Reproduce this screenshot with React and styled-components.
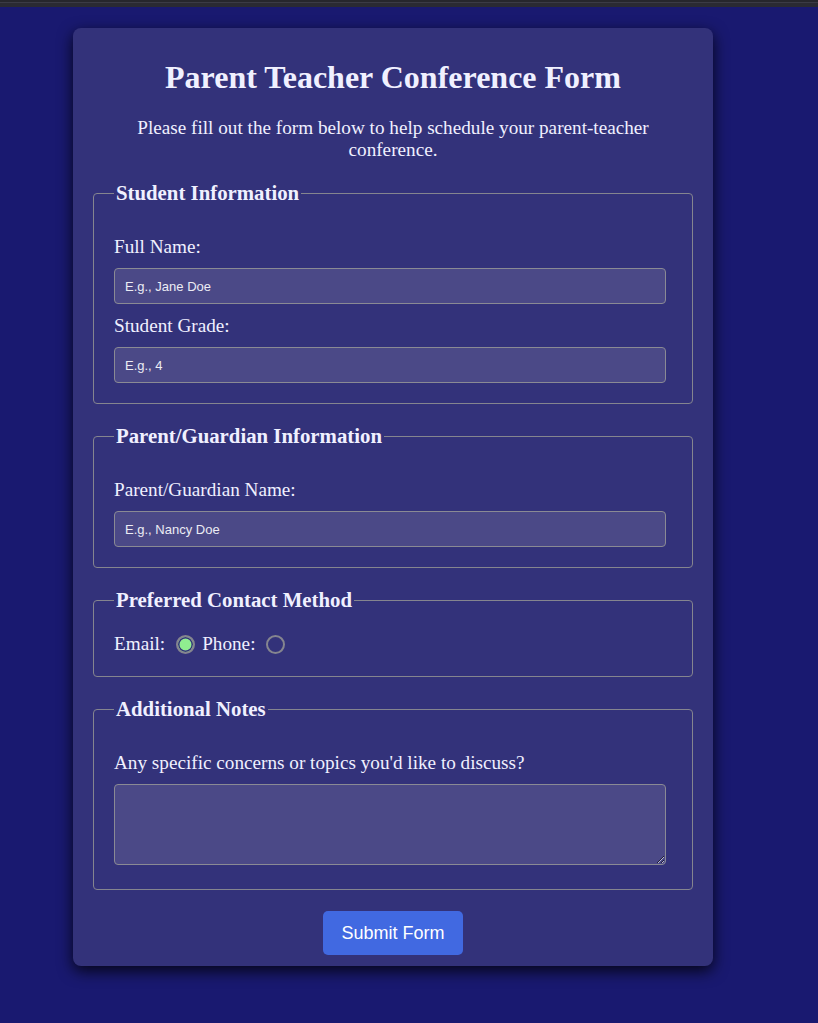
import React, { useState } from 'react';
import styled, { createGlobalStyle } from 'styled-components';

const GlobalStyle = createGlobalStyle`
    body {
        margin: 0;
        background: #191970;
        font-family: "Liberation Serif", "Times New Roman", serif;
        color: #f0f0ff;
    }
`;

const TopBar = styled.div`
    height: 7px;
    background: #2a2a33;
    border-top: 2px solid #26262d;
    box-sizing: border-box;
    box-shadow: inset 0 1px 0 #3b3b46;
`;

const Page = styled.div`
    padding: 21px 0 40px 73px;
`;

const Card = styled.form`
    width: 640px;
    box-sizing: border-box;
    padding: 10px 20px 11px;
    background: #33327a;
    border-radius: 8px;
    box-shadow: 0 5px 15px rgba(0, 0, 0, 0.8);
    display: flex;
    flex-direction: column;
`;

const Title = styled.h1`
    margin: 21px 0 21px;
    font-size: 32px;
    line-height: 37px;
    text-align: center;
`;

const Intro = styled.p`
    margin: 0 0 20px;
    font-size: 19.2px;
    line-height: 22px;
    text-align: center;
`;

const Section = styled.fieldset`
    margin: 0 0 20px;
    padding: 20px 20px 20px;
    border: 1px solid #85858f;
    border-radius: 4px;
`;

const Legend = styled.legend`
    padding: 0 2px;
    font-size: 20.8px;
    line-height: 24px;
    font-weight: bold;
`;

const Label = styled.label`
    display: block;
    margin: 10px 0 9px;
    font-size: 19.2px;
    line-height: 24px;
`;

const TextInput = styled.input`
    display: block;
    width: 552px;
    height: 36px;
    box-sizing: border-box;
    padding: 0 10px;
    background: #4b4987;
    border: 1px solid #8a8a94;
    border-radius: 4px;
    color: #f0f0ff;
    font-family: "Liberation Sans", Arial, sans-serif;
    font-size: 13px;

    &::placeholder {
        color: #ececf4;
    }
`;

const NotesArea = styled.textarea`
    display: block;
    width: 552px;
    height: 81px;
    box-sizing: border-box;
    margin-bottom: 4px;
    padding: 10px;
    background: #4b4987;
    border: 1px solid #8a8a94;
    border-radius: 4px;
    color: #f0f0ff;
    font-family: "Liberation Sans", Arial, sans-serif;
`;

const RadioRow = styled.div`
    display: flex;
    align-items: center;
    font-size: 19.2px;
    line-height: 24px;
`;

const Radio = styled.input`
    appearance: none;
    width: 19px;
    height: 19px;
    margin: 0 7px 0 11px;
    border: 2px solid #85858f;
    border-radius: 50%;
    box-sizing: border-box;
    background: transparent;

    &:checked {
        background: #90ee90;
        box-shadow: inset 0 0 0 1.5px #33327a;
    }
`;

const SubmitButton = styled.button`
    align-self: center;
    width: 140px;
    height: 44px;
    margin-top: 1px;
    background: #4169e1;
    border: none;
    border-radius: 5px;
    color: #fff;
    font-family: "Liberation Sans", Arial, sans-serif;
    font-size: 18px;
    cursor: pointer;
`;

const App = () => {
    const [contact, setContact] = useState('email');

    return (
        <>
            <GlobalStyle />
            <TopBar />
            <Page>
                <Card onSubmit={e => e.preventDefault()}>
                    <Title>Parent Teacher Conference Form</Title>
                    <Intro>Please fill out the form below to help schedule your parent-teacher conference.</Intro>

                    <Section>
                        <Legend>Student Information</Legend>
                        <Label htmlFor="student-name">Full Name:</Label>
                        <TextInput id="student-name" placeholder="E.g., Jane Doe" />
                        <Label htmlFor="student-grade">Student Grade:</Label>
                        <TextInput id="student-grade" placeholder="E.g., 4" />
                    </Section>

                    <Section>
                        <Legend>Parent/Guardian Information</Legend>
                        <Label htmlFor="parent-name">Parent/Guardian Name:</Label>
                        <TextInput id="parent-name" placeholder="E.g., Nancy Doe" />
                    </Section>

                    <Section>
                        <Legend>Preferred Contact Method</Legend>
                        <RadioRow>
                            Email:
                            <Radio type="radio" name="contact" checked={contact === 'email'} onChange={() => setContact('email')} />
                            Phone:
                            <Radio type="radio" name="contact" checked={contact === 'phone'} onChange={() => setContact('phone')} />
                        </RadioRow>
                    </Section>

                    <Section>
                        <Legend>Additional Notes</Legend>
                        <Label htmlFor="notes">Any specific concerns or topics you'd like to discuss?</Label>
                        <NotesArea id="notes" />
                    </Section>

                    <SubmitButton type="submit">Submit Form</SubmitButton>
                </Card>
            </Page>
        </>
    );
};

export default App;
